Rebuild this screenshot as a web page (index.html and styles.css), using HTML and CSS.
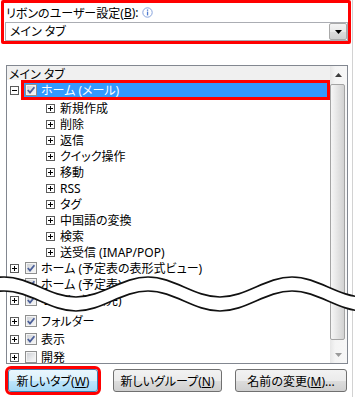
FILE: index.html
```html
<!DOCTYPE html>
<html lang="ja">
<head>
    <meta charset="UTF-8">
    <meta name="viewport" content="width=device-width, initial-scale=1.0">
    <title>リボンのユーザー設定</title>
    <link rel="stylesheet" href="styles.css">
</head>
<body>
    <div class="dialog">
        <div class="ribbon-pick">
            <div class="pick-label">
                リボンのユーザー設定(<u>B</u>):
                <svg class="info" width="11" height="11" viewBox="0 0 11 11">
                    <circle cx="5.5" cy="5.5" r="4.7" fill="#fff" stroke="#86a2dc"/>
                    <rect x="4.9" y="4.6" width="1.3" height="3.8" fill="#4f7bd0"/>
                    <rect x="4.9" y="2.5" width="1.3" height="1.3" fill="#4f7bd0"/>
                </svg>
            </div>
            <div class="combo">
                <span class="combo-text">メイン タブ</span>
                <span class="combo-btn">
                    <svg width="7" height="4" viewBox="0 0 7 4"><path d="M0 0H7L3.5 4Z" fill="#000"/></svg>
                </span>
            </div>
        </div>

        <div class="listbox">
            <div class="tree">
                <div class="tree-head">メイン タブ</div>

                <div class="node selected">
                    <span class="twist open"></span>
                    <div class="item">
                        <span class="check on"><svg viewBox="0 0 10 10"><path d="M1.8 5 L4 7.6 L8.4 2.2"/></svg></span>
                        <span class="name">ホーム (メール)</span>
                    </div>
                </div>

                <div class="node child"><span class="twist"></span><span class="name">新規作成</span></div>
                <div class="node child"><span class="twist"></span><span class="name">削除</span></div>
                <div class="node child"><span class="twist"></span><span class="name">返信</span></div>
                <div class="node child"><span class="twist"></span><span class="name">クイック操作</span></div>
                <div class="node child"><span class="twist"></span><span class="name">移動</span></div>
                <div class="node child"><span class="twist"></span><span class="name">RSS</span></div>
                <div class="node child"><span class="twist"></span><span class="name">タグ</span></div>
                <div class="node child"><span class="twist"></span><span class="name">中国語の変換</span></div>
                <div class="node child"><span class="twist"></span><span class="name">検索</span></div>
                <div class="node child"><span class="twist"></span><span class="name">送受信 (IMAP/POP)</span></div>

                <div class="node">
                    <span class="twist"></span>
                    <div class="item">
                        <span class="check on"><svg viewBox="0 0 10 10"><path d="M1.8 5 L4 7.6 L8.4 2.2"/></svg></span>
                        <span class="name">ホーム (予定表の表形式ビュー)</span>
                    </div>
                </div>
                <div class="node">
                    <span class="twist"></span>
                    <div class="item">
                        <span class="check on"><svg viewBox="0 0 10 10"><path d="M1.8 5 L4 7.6 L8.4 2.2"/></svg></span>
                        <span class="name">ホーム (予定表)</span>
                    </div>
                </div>
                <div class="node">
                    <span class="twist"></span>
                    <div class="item">
                        <span class="check on"><svg viewBox="0 0 10 10"><path d="M1.8 5 L4 7.6 L8.4 2.2"/></svg></span>
                        <span class="name">ホーム (連絡先)</span>
                    </div>
                </div>

                <div class="lower">
                    <div class="node">
                        <span class="twist"></span>
                        <div class="item">
                            <span class="check on"><svg viewBox="0 0 10 10"><path d="M1.8 5 L4 7.6 L8.4 2.2"/></svg></span>
                            <span class="name">フォルダー</span>
                        </div>
                    </div>
                    <div class="node">
                        <span class="twist"></span>
                        <div class="item">
                            <span class="check on"><svg viewBox="0 0 10 10"><path d="M1.8 5 L4 7.6 L8.4 2.2"/></svg></span>
                            <span class="name">表示</span>
                        </div>
                    </div>
                    <div class="node">
                        <span class="twist"></span>
                        <div class="item">
                            <span class="check"></span>
                            <span class="name">開発</span>
                        </div>
                    </div>
                </div>
            </div>

            <div class="scrollbar">
                <div class="sb-btn">
                    <svg width="7" height="4" viewBox="0 0 7 4"><path d="M3.5 0L7 4H0Z" fill="#3c3c3c"/></svg>
                </div>
                <div class="sb-track"><div class="sb-thumb"></div></div>
                <div class="sb-btn">
                    <svg width="7" height="4" viewBox="0 0 7 4"><path d="M0 0H7L3.5 4Z" fill="#9a9a9a"/></svg>
                </div>
            </div>
        </div>

        <div class="actions">
            <button class="btn hot new-tab">新しいタブ(<u>W</u>)</button>
            <button class="btn new-group">新しいグループ(<u>N</u>)</button>
            <button class="btn rename">名前の変更(<u>M</u>)...</button>
        </div>

        <!-- break mark drawn over the list -->
        <svg class="cut" width="355" height="46" viewBox="0 0 355 46">
            <path fill="#fff" d="M-68 27 C-41.8 27 -22.2 7 4 7 C30.2 7 49.8 27 76 27 C102.2 27 121.8 7 148 7 C174.2 7 193.8 27 220 27 C246.2 27 265.8 7 292 7 C318.2 7 337.8 27 364 27 L364 41 C337.8 41 318.2 21 292 21 C265.8 21 246.2 41 220 41 C193.8 41 174.2 21 148 21 C121.8 21 102.2 41 76 41 C49.8 41 30.2 21 4 21 C-22.2 21 -41.8 41 -68 41 Z"/>
            <path class="cut-line" d="M-68 27 C-41.8 27 -22.2 7 4 7 C30.2 7 49.8 27 76 27 C102.2 27 121.8 7 148 7 C174.2 7 193.8 27 220 27 C246.2 27 265.8 7 292 7 C318.2 7 337.8 27 364 27"/>
            <path class="cut-line" d="M-68 41 C-41.8 41 -22.2 21 4 21 C30.2 21 49.8 41 76 41 C102.2 41 121.8 21 148 21 C174.2 21 193.8 41 220 41 C246.2 41 265.8 21 292 21 C318.2 21 337.8 41 364 41"/>
        </svg>
    </div>
</body>
</html>
```

FILE: styles.css
```css
*, *::before, *::after {
    margin: 0;
    padding: 0;
    box-sizing: border-box;
}

html, body {
    height: 100%;
    overflow: hidden;
    background-color: #fff;
}

body {
    font-family: "Noto Sans", "Noto Sans CJK JP", sans-serif;
    font-size: 12px;
    font-feature-settings: "palt";
    color: #000;
}

.dialog {
    position: relative;
    width: 353px;
    height: 397px;
    border-right: 1px solid #d2d2d2;
}

/* top: ribbon chooser */
.ribbon-pick {
    margin-left: 1px;
    width: 350px;
    height: 44px;
    border: 3px solid #f00;
    border-radius: 2px;
}

.pick-label {
    display: flex;
    align-items: center;
    height: 19px;
    padding-left: 2px;
    white-space: nowrap;

    .info {
        margin-left: 3px;
    }
}

.combo {
    display: flex;
    margin-left: 1px;
    height: 19px;
    border: 1px solid #abadb3;

    .combo-text {
        flex: 1;
        padding-left: 4px;
        line-height: 17px;
    }

    .combo-btn {
        display: flex;
        align-items: center;
        justify-content: center;
        width: 18px;
        height: 17px;
        border: 1px solid #a9a9a9;
        border-radius: 2px;
        background: linear-gradient(#f4f4f4, #e9e9e9 50%, #dcdcdc 51%, #d0d0d0);
    }
}

/* tree list */
.listbox {
    display: flex;
    margin: 21px 0 0 6px;
    width: 342px;
    height: 299px;
    border: 1px solid #828790;
    overflow: hidden;
}

.tree {
    flex: 1;
    overflow: hidden;
    white-space: nowrap;
}

.tree-head {
    height: 14px;
    line-height: 17px;
    padding-left: 2px;
    background-color: #f0f0f0;
}

.node {
    display: flex;
    align-items: center;
    height: 16px;
}

.node.selected {
    height: 20px;

    .item {
        flex: 1;
        margin-right: 3px;
        background-color: #3399ff;
        color: #fff;
        outline: 3px solid #f00;
    }
}

.twist {
    flex: none;
    width: 9px;
    height: 9px;
    margin-left: 3px;
    border: 1px solid #5c5c5c;
    background:
        linear-gradient(#000, #000) center / 5px 1px no-repeat,
        linear-gradient(#000, #000) center / 1px 5px no-repeat,
        #fff;

    &.open {
        background:
            linear-gradient(#000, #000) center / 5px 1px no-repeat,
            #fff;
    }
}

.item {
    display: flex;
    align-items: center;
    height: 14px;
    margin-left: 5px;
    padding-left: 1px;
}

.check {
    flex: none;
    width: 12px;
    height: 12px;
    margin-right: 4px;
    border: 1px solid #8e8f8f;
    box-shadow: inset 0 0 0 1px #f4f4f4;
    background: linear-gradient(135deg, #c9ccd1, #eeeff0 70%, #f6f6f6);

    svg {
        display: block;
        width: 10px;
        height: 10px;

        path {
            fill: none;
            stroke: #4b5f99;
            stroke-width: 1.8;
        }
    }
}

.child {
    .twist {
        margin-left: 39px;
    }

    .name {
        margin-left: 5px;
    }
}

.lower {
    margin-top: 4px;

    .node {
        height: 18px;
    }
}

/* scrollbar */
.scrollbar {
    display: flex;
    flex-direction: column;
    width: 17px;
    background: linear-gradient(to right, #e6e6e6, #f4f4f4 30%, #f7f7f7);
}

.sb-btn {
    display: flex;
    align-items: center;
    justify-content: center;
    height: 17px;
}

.sb-track {
    flex: 1;
    padding: 1px 2px 6px 0;
}

.sb-thumb {
    height: 100%;
    border: 1px solid #a4a4a4;
    border-radius: 2px;
    background: linear-gradient(to right, #f6f6f6, #e6e6e6 45%, #d2d2d2);
}

/* buttons */
.actions {
    display: flex;
    margin-top: 5px;
}

.btn {
    height: 23px;
    font: inherit;
    font-feature-settings: "palt";
    color: #000;
    border: 1px solid #707070;
    border-radius: 3px;
    background: linear-gradient(#f2f2f2, #ebebeb 50%, #dddddd 51%, #cfcfcf);

    &.hot {
        border-color: #3c7fb1;
        background: linear-gradient(#eaf6fd, #d9f0fc 50%, #bee6fd 51%, #a7d9f5);
        outline: 3px solid #f00;
    }
}

.new-tab {
    width: 90px;
    margin-left: 8px;
}

.new-group {
    width: 109px;
    margin-left: 15px;
}

.rename {
    width: 112px;
    margin-left: 13px;
}

/* wavy break over the list */
.cut {
    position: absolute;
    top: 270px;
    left: 0;

    .cut-line {
        fill: none;
        stroke: #111;
        stroke-width: 1.6;
    }
}
```
